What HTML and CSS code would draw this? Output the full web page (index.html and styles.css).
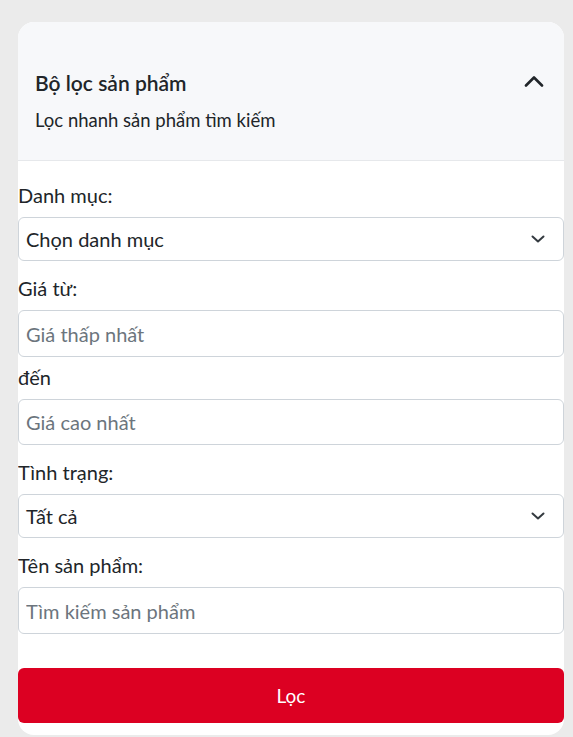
FILE: index.html
```html
<!DOCTYPE html>
<html lang="vi">
<head>
<meta charset="utf-8">
<link rel="stylesheet" href="styles.css">
</head>
<body>
<div class="card">
  <div class="card-header">
    <div class="head-text">
      <h2 class="title">Bộ lọc sản phẩm</h2>
      <p class="subtitle">Lọc nhanh sản phẩm tìm kiếm</p>
    </div>
    <svg class="chev-up" width="20" height="12" viewBox="0 0 20 12"><path d="M2 10.5 L10 2.5 L18 10.5" fill="none" stroke="#212529" stroke-width="2.6" stroke-linecap="round" stroke-linejoin="round"/></svg>
  </div>
  <form class="card-body">
    <div class="group">
      <label class="label">Danh mục:</label>
      <div class="select">
        <span>Chọn danh mục</span>
        <svg width="14" height="8" viewBox="0 0 14 8"><path d="M1.5 1.5 L7 6.5 L12.5 1.5" fill="none" stroke="#343a40" stroke-width="2" stroke-linecap="round" stroke-linejoin="round"/></svg>
      </div>
    </div>
    <div class="group">
      <label class="label">Giá từ:</label>
      <input class="input" type="text" placeholder="Giá thấp nhất">
      <label class="label label-sub">đến</label>
      <input class="input input-b" type="text" placeholder="Giá cao nhất">
    </div>
    <div class="group">
      <label class="label">Tình trạng:</label>
      <div class="select">
        <span>Tất cả</span>
        <svg width="14" height="8" viewBox="0 0 14 8"><path d="M1.5 1.5 L7 6.5 L12.5 1.5" fill="none" stroke="#343a40" stroke-width="2" stroke-linecap="round" stroke-linejoin="round"/></svg>
      </div>
    </div>
    <div class="group">
      <label class="label">Tên sản phẩm:</label>
      <input class="input" type="text" placeholder="Tìm kiếm sản phẩm">
    </div>
    <button class="btn" type="button">Lọc</button>
  </form>
</div>
</body>
</html>
```

FILE: styles.css
```css
* { box-sizing: border-box; }
html, body { margin: 0; }
body {
  background: #ebebeb;
  padding: 22px 9px 0 18px;
  font-family: Lato, "Noto Sans", sans-serif;
  color: #212529;
}
.card {
  background: #fff;
  border-radius: 16px;
  overflow: hidden;
  height: 713px;
}
.card-header {
  background: #f7f8fa;
  border-bottom: 1px solid #e6e8eb;
  height: 139px;
  padding: 47px 20px 0 17px;
  display: flex;
  justify-content: space-between;
  align-items: flex-start;
}
.title {
  margin: 0;
  font-size: 21px;
  font-weight: 600;
  line-height: 28px;
}
.subtitle {
  margin: 11px 0 0;
  font-size: 18.5px;
  line-height: 24px;
}
.chev-up { margin-top: 5.5px; }
.card-body {
  padding: 22px 0 12px;
  display: flex;
  flex-direction: column;
}
.group { display: flex; flex-direction: column; }
.group + .group { margin-top: 15px; }
.label {
  font-size: 20px;
  line-height: 24px;
  margin-bottom: 10px;
}
.label-sub { margin-top: 8px; }
.select {
  height: 44px;
  border: 1px solid #ced4da;
  border-radius: 6px;
  display: flex;
  align-items: center;
  justify-content: space-between;
  padding: 0 18px 0 7px;
  font-size: 20px;
}
.input {
  height: 47px;
  border: 1px solid #ced4da;
  border-radius: 6px;
  padding: 0 7px;
  font-family: inherit;
  font-size: 20px;
  color: #212529;
  outline: none;
}
.input-b { height: 46px; }
.input::placeholder { color: #6c757d; }
.btn {
  margin-top: 34px;
  height: 55px;
  border: 0;
  border-radius: 6px;
  background: #dc0022;
  color: #fff;
  font-family: inherit;
  font-size: 19px;
}
```
